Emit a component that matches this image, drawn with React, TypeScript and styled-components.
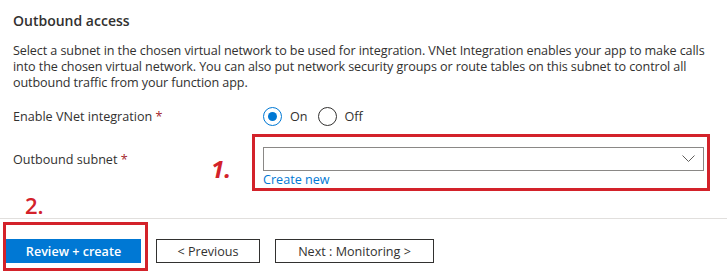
import React, { ReactNode } from 'react';
import styled, { createGlobalStyle } from 'styled-components';

const GlobalStyle = createGlobalStyle`
  html, body {
    margin: 0;
    padding: 0;
    background: #ffffff;
  }
  body {
    font-family: "Open Sans", "Noto Sans", sans-serif;
    color: #323130;
  }
`;

const Page = styled.div`
  width: 727px;
  height: 272px;
  overflow: hidden;
  display: flex;
  flex-direction: column;
`;

const Section = styled.section`
  padding: 12px 0 0 13px;
`;

const Heading = styled.h2`
  margin: 0;
  font-size: 14px;
  line-height: 18px;
  font-weight: 600;
`;

const Description = styled.p`
  margin: 13px 0 0;
  width: 700px;
  font-size: 12.6px;
  line-height: 16px;
  letter-spacing: -0.1px;
`;

const FormRow = styled.div<{ $top: number }>`
  display: grid;
  grid-template-columns: 250px 1fr;
  align-items: start;
  margin-top: ${p => p.$top}px;
`;

const Label = styled.label<{ $shift?: number }>`
  font-size: 12.6px;
  line-height: 20px;
  padding-top: ${p => p.$shift ?? 0}px;
`;

const Required = styled.span`
  color: #a4262c;
`;

const RadioGroup = styled.div`
  display: flex;
  align-items: center;
  gap: 10px;
`;

const RadioOption = styled.div`
  display: flex;
  align-items: center;
  gap: 8px;
  font-size: 12.6px;
`;

const RadioCircle = styled.span<{ $checked?: boolean }>`
  width: 17px;
  height: 17px;
  border-radius: 50%;
  border: 1px solid ${p => (p.$checked ? '#0078d4' : '#323130')};
  display: flex;
  align-items: center;
  justify-content: center;

  &::after {
    content: '';
    width: 9px;
    height: 9px;
    border-radius: 50%;
    background: ${p => (p.$checked ? '#0078d4' : 'transparent')};
  }
`;

const FieldWrap = styled.div`
  position: relative;
  width: 441px;
`;

const Select = styled.div`
  height: 22px;
  border: 1px solid #8a8886;
  display: flex;
  align-items: center;
  justify-content: flex-end;
  padding-right: 8px;
`;

const Link = styled.a`
  display: block;
  margin-top: 1px;
  font-size: 12.6px;
  line-height: 16px;
  color: #0078d4;
  text-decoration: none;
`;

const Annotation = styled.div<{ $inset: string }>`
  position: absolute;
  inset: ${p => p.$inset};
  border: 3px solid #d3222a;
  pointer-events: none;
`;

const Marker = styled.span<{ $left: number; $top: number; $italic?: boolean }>`
  position: absolute;
  left: ${p => p.$left}px;
  top: ${p => p.$top}px;
  color: #d3222a;
  font-family: "Open Sans", sans-serif;
  font-style: ${p => (p.$italic ? 'italic' : 'normal')};
  font-weight: ${p => (p.$italic ? 700 : 600)};
  font-size: ${p => (p.$italic ? 24 : 22)}px;
  line-height: 26px;
`;

const Footer = styled.footer`
  margin-top: 30px;
  border-top: 1px solid #e1dfdd;
  padding: 20px 0 0 6px;
  display: flex;
  gap: 15px;
`;

const ButtonWrap = styled.div`
  position: relative;
  display: flex;
`;

const Button = styled.button<{ $primary?: boolean; $width: number }>`
  width: ${p => p.$width}px;
  height: 24px;
  margin: 0;
  padding: 0;
  font-family: "Open Sans", sans-serif;
  font-size: 12.6px;
  font-weight: ${p => (p.$primary ? 600 : 400)};
  color: ${p => (p.$primary ? '#ffffff' : '#323130')};
  background: ${p => (p.$primary ? '#0078d4' : '#ffffff')};
  border: 1px solid ${p => (p.$primary ? '#0078d4' : '#323130')};
  border-radius: 0;
`;

const Chevron = () => (
  <svg width="13" height="8" viewBox="0 0 13 8">
    <path d="M0.5 0.5 L6.5 6.5 L12.5 0.5" fill="none" stroke="#605e5c" strokeWidth="1" />
  </svg>
);

const Row = ({ label, top, shift, children }: { label: string; top: number; shift?: number; children: ReactNode }) => (
  <FormRow $top={top}>
    <Label $shift={shift}>
      {label} <Required>*</Required>
    </Label>
    {children}
  </FormRow>
);

export default function App() {
  return (
    <Page>
      <GlobalStyle />
      <Section>
        <Heading>Outbound access</Heading>
        <Description>
          Select a subnet in the chosen virtual network to be used for integration. VNet Integration enables your app to make calls
          into the chosen virtual network. You can also put network security groups or route tables on this subnet to control all
          outbound traffic from your function app.
        </Description>
        <Row label="Enable VNet integration" top={16}>
          <RadioGroup>
            <RadioOption>
              <RadioCircle $checked />
              On
            </RadioOption>
            <RadioOption>
              <RadioCircle />
              Off
            </RadioOption>
          </RadioGroup>
        </Row>
        <Row label="Outbound subnet" top={20} shift={3}>
          <FieldWrap>
            <Select>
              <Chevron />
            </Select>
            <Link href="#">Create new</Link>
            <Annotation $inset="-13px -6px -3px -11px" />
            <Marker $left={-52} $top={9} $italic>1.</Marker>
          </FieldWrap>
        </Row>
      </Section>
      <Footer>
        <ButtonWrap>
          <Button $primary $width={135}>Review + create</Button>
          <Annotation $inset="-17px -7px -8px -3px" />
          <Marker $left={19} $top={-47}>2.</Marker>
        </ButtonWrap>
        <Button $width={104}>&lt; Previous</Button>
        <Button $width={159}>Next : Monitoring &gt;</Button>
      </Footer>
    </Page>
  );
}
